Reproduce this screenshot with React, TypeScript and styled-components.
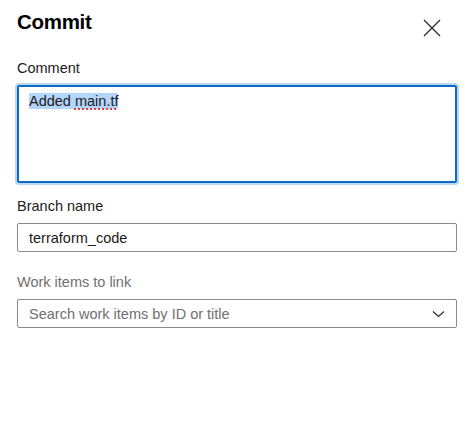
import React from "react";
import styled, { createGlobalStyle } from "styled-components";

const Global = createGlobalStyle`
  html, body { margin: 0; padding: 0; background: #ffffff; }
  body { font-family: "Liberation Sans", Arial, sans-serif; color: #1b1b1b; }
`;

const Panel = styled.div`
  width: 472px;
  height: 439px;
  box-sizing: border-box;
  padding: 8px 15px 0 17px;
  display: flex;
  flex-direction: column;
`;

const Header = styled.div`
  display: flex;
  justify-content: space-between;
  align-items: flex-start;
  height: 50px;
`;

const Title = styled.h1`
  margin: 0;
  font-size: 20.5px;
  line-height: 28px;
  font-weight: 700;
  color: #000;
  letter-spacing: -0.3px;
`;

const CloseButton = styled.button`
  border: none;
  background: none;
  padding: 0;
  margin: 11px 16px 0 0;
  width: 18px;
  height: 18px;
  display: flex;
  align-items: center;
  justify-content: center;
  cursor: pointer;
`;

const Field = styled.div<{ $gap?: number }>`
  display: flex;
  flex-direction: column;
  margin-bottom: ${(p) => p.$gap ?? 0}px;
`;

const Label = styled.label<{ $muted?: boolean }>`
  font-size: 14.5px;
  line-height: 20px;
  color: ${(p) => (p.$muted ? "#707070" : "#1b1b1b")};
  margin-bottom: 7px;
`;

const TextArea = styled.div`
  box-sizing: border-box;
  height: 98px;
  border: 2px solid #0b6ac6;
  border-radius: 2px;
  box-shadow: 0 0 0 2px #b9d6f2;
  padding: 4px 10px;
  font-size: 14.5px;
  line-height: 20px;
  color: #1b1b1b;
`;

const Selected = styled.span`
  background: #b3d5fb;
`;

const Misspelled = styled.span`
  text-decoration: underline dotted #e0433f;
  text-decoration-thickness: 2px;
  text-underline-offset: 2px;
`;

const Input = styled.div<{ $placeholder?: boolean }>`
  box-sizing: border-box;
  height: 29px;
  border: 1px solid #8a8a8a;
  border-radius: 2px;
  padding: 0 11px;
  display: flex;
  align-items: center;
  justify-content: space-between;
  font-size: 14.5px;
  color: ${(p) => (p.$placeholder ? "#707070" : "#1b1b1b")};
`;

const ChevronBox = styled.span`
  display: flex;
  margin-right: 0;
`;

export default function App() {
  return (
    <>
      <Global />
      <Panel>
        <Header>
          <Title>Commit</Title>
          <CloseButton aria-label="Close">
            <svg width="18" height="18" viewBox="0 0 18 18">
              <path d="M1 1 L17 17 M17 1 L1 17" stroke="#2b2b2b" strokeWidth="1.3" fill="none" />
            </svg>
          </CloseButton>
        </Header>
        <Field $gap={13}>
          <Label>Comment</Label>
          <TextArea>
            <Selected>
              Added <Misspelled>main.tf</Misspelled>
            </Selected>
          </TextArea>
        </Field>
        <Field $gap={20}>
          <Label>Branch name</Label>
          <Input>terraform_code</Input>
        </Field>
        <Field>
          <Label $muted>Work items to link</Label>
          <Input $placeholder>
            Search work items by ID or title
            <ChevronBox>
              <svg width="13" height="8" viewBox="0 0 13 8">
                <path d="M1 1.5 L6.5 6.5 L12 1.5" stroke="#2b2b2b" strokeWidth="1.2" fill="none" />
              </svg>
            </ChevronBox>
          </Input>
        </Field>
      </Panel>
    </>
  );
}
